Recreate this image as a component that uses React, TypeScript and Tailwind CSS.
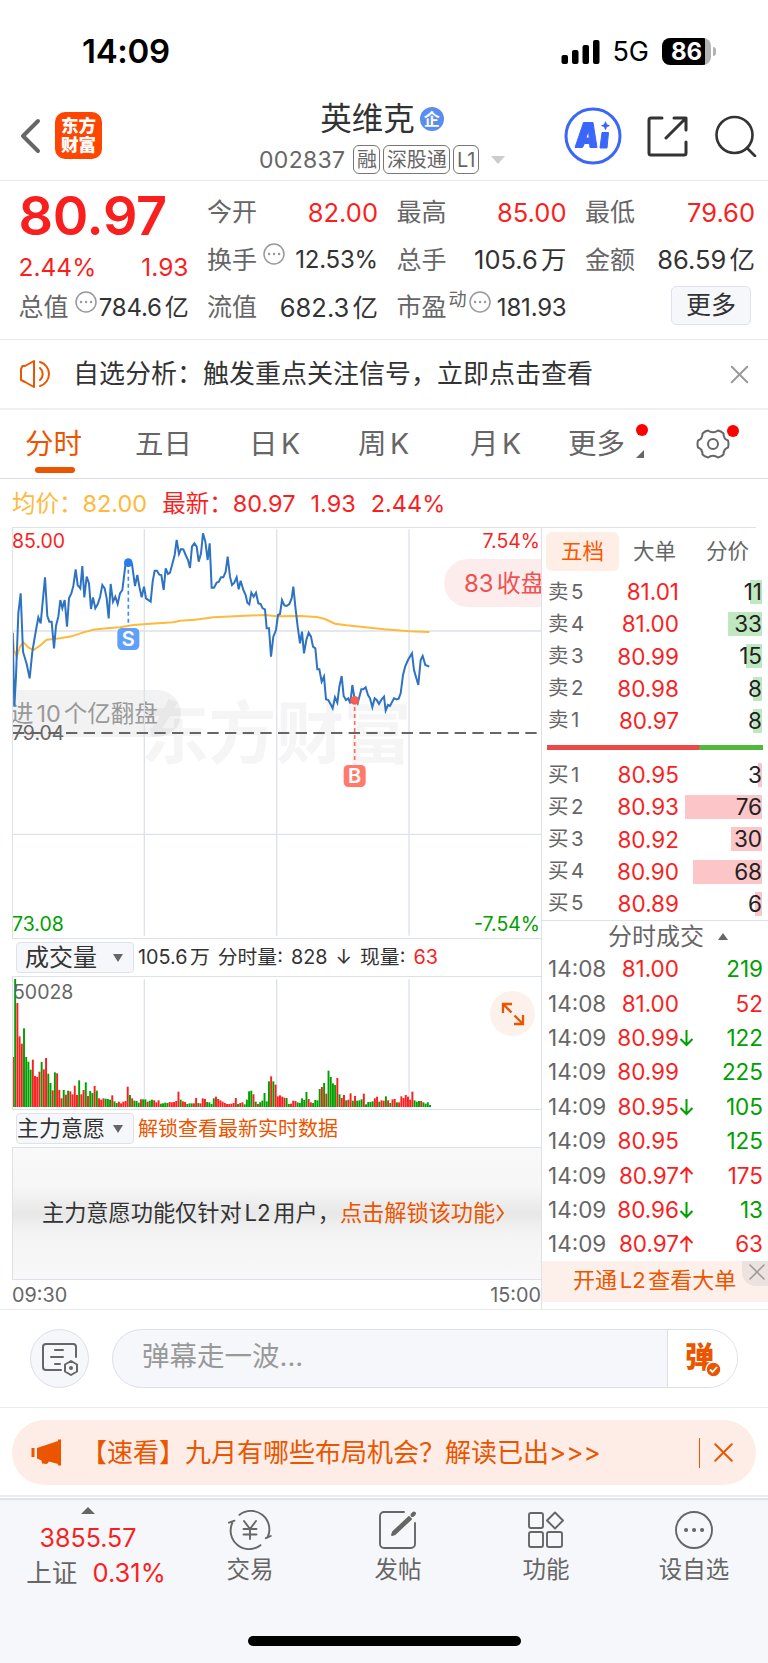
import type { ReactNode } from 'react';
import { X } from 'lucide-react';

const RED = '#fa1f1f';
const GREEN = '#00a000';
const GRID = '#dde2ea';

// Chart geometry is drawn at three units per pixel.
const pricePoints =
  '38,668 43,890 48,800 55,610 62,550 69,725 80,762 89,805 97,725 108,660 115,622 122,640 135,502 142,618 148,635 155,635 162,715 168,648 175,620 181,570 187,595 194,570 201,650 207,565 214,550 220,528 227,478 233,525 241,535 247,468 253,562 260,500 267,520 273,597 279,562 286,595 293,583 300,562 307,525 314,535 320,565 326,625 332,522 339,575 346,560 353,582 360,550 367,540 372,500 377,458 396,462 405,528 412,495 418,530 425,562 432,530 438,565 452,575 458,515 464,482 471,482 478,494 484,495 491,540 497,475 504,492 510,488 517,462 524,435 530,390 537,432 543,417 550,418 557,435 564,450 570,474 576,410 583,400 590,410 596,455 603,430 609,370 616,395 623,450 629,400 635,533 642,533 650,518 656,516 663,502 670,502 677,485 683,440 690,500 696,525 703,518 710,502 716,538 722,512 730,540 737,555 742,578 748,583 754,548 761,560 768,548 775,580 782,582 788,595 795,598 800,655 807,655 813,740 820,680 828,660 834,615 840,612 846,570 853,586 860,588 868,582 875,565 880,530 886,590 893,650 900,700 906,665 912,730 919,690 926,668 933,680 939,710 946,715 952,778 958,778 965,815 972,800 978,868 985,870 993,885 998,895 1005,862 1012,878 1018,830 1025,798 1031,858 1038,870 1045,865 1051,880 1057,825 1063,862 1073,880 1084,838 1090,838 1097,832 1104,855 1110,865 1117,892 1124,865 1130,870 1137,882 1145,868 1152,860 1157,902 1164,885 1170,888 1182,865 1190,868 1196,866 1202,850 1209,795 1216,768 1224,750 1236,730 1242,780 1255,825 1262,750 1268,738 1276,765 1288,770';

const averagePoints =
  '38,668 42,720 50,740 60,710 70,697 85,712 100,720 120,707 140,689 180,685 215,679 250,667 280,659 320,655 360,652 400,645 430,643 520,637 540,632 585,629 640,622 720,618 795,615 830,619 900,618 950,621 975,627 1005,641 1040,646 1152,658 1230,664 1288,666';

// Positive values are buying minutes, negative ones selling minutes.
const volumes = [
  150, -384, 312, 212, 190, -236, -150, -136, -112, 142, 93, 90, 106, -135, 113, 147, -100, -72, 50, -104,
  101, 51, 26, -51, 37, -49, 47, 38, 64, 36, -80, 38, 51, -74, 33, -48, -42, 63, -49, 26,
  22, 26, -25, -24, -22, 35, -17, -12, 16, 11, 16, 18, 61, -36, 26, -19, -18, -13, 23, -23,
  -23, 16, -19, -22, 20, 14, 20, -10, -11, -13, -12, 15, 14, 15, 18, 46, -22, 17, 15, -9,
  -11, -11, 11, 27, -12, 11, 26, 24, -15, -14, -9, -26, 31, 24, 20, 16, 12, 9, 9, 10,
  12, 27, -9, 12, 14, -8, -22, -47, -49, 38, -16, 9, -14, -19, -42, -17, -77, 92, -77, 67,
  32, 35, 31, 28, -27, -9, 10, 19, 18, -14, -12, -26, -21, -45, 24, 14, -12, -21, -20, -54,
  60, -72, 40, -109, -90, -71, -66, 87, -38, 27, 36, -20, 22, 41, -19, 33, -19, -20, -23, 40,
  -8, -15, -15, -17, 26, 31, -16, 20, 19, -32, 20, -12, 23, 24, -14, 14, 32, 27, 36, 31,
  22, 46, -20, -16, -18, 18, -14, -10, -14, -6,
];

const asks = [
  { label: '卖5', price: '81.01', amount: 11 },
  { label: '卖4', price: '81.00', amount: 33 },
  { label: '卖3', price: '80.99', amount: 15 },
  { label: '卖2', price: '80.98', amount: 8 },
  { label: '卖1', price: '80.97', amount: 8 },
];

const bids = [
  { label: '买1', price: '80.95', amount: 3 },
  { label: '买2', price: '80.93', amount: 76 },
  { label: '买3', price: '80.92', amount: 30 },
  { label: '买4', price: '80.90', amount: 68 },
  { label: '买5', price: '80.89', amount: 6 },
];

const trades = [
  { time: '14:08', price: '81.00', dir: '', amount: 219, up: false },
  { time: '14:08', price: '81.00', dir: '', amount: 52, up: true },
  { time: '14:09', price: '80.99', dir: 'down', amount: 122, up: false },
  { time: '14:09', price: '80.99', dir: '', amount: 225, up: false },
  { time: '14:09', price: '80.95', dir: 'down', amount: 105, up: false },
  { time: '14:09', price: '80.95', dir: '', amount: 125, up: false },
  { time: '14:09', price: '80.97', dir: 'up', amount: 175, up: true },
  { time: '14:09', price: '80.96', dir: 'down', amount: 13, up: false },
  { time: '14:09', price: '80.97', dir: 'up', amount: 63, up: true },
];

function StatusBar() {
  return (
    <div className="flex h-[90px] items-center justify-between pt-3 pl-[82px] pr-[52px]">
      <span className="text-[33px] font-semibold leading-none tracking-[-0.3px] text-black">14:09</span>
      <div className="flex items-center">
        <svg width="39" height="25" viewBox="0 0 39 25">
          <rect x="0.5" y="16" width="6.5" height="9" rx="2" />
          <rect x="11" y="11" width="6.5" height="14" rx="2" />
          <rect x="21.5" y="6" width="6.5" height="19" rx="2" />
          <rect x="32" y="1" width="6.5" height="24" rx="2" />
        </svg>
        <span className="ml-[12px] text-[27px] leading-none text-black">5G</span>
        <div className="ml-[13px] flex h-[27px] w-[49px] items-center justify-center rounded-[8px] bg-[linear-gradient(to_right,black_43px,#b3b3b3_43px)] text-[24px] font-bold leading-[27px] text-white">
          86
        </div>
        <div className="ml-[2px] h-[9px] w-[3px] rounded-r-full bg-[#b3b3b3]" />
      </div>
    </div>
  );
}

function Tag({ children }: { children: ReactNode }) {
  return (
    <span className="flex h-[29px] items-center justify-center rounded-[6px] border border-[#777] px-[2.500px] text-[20px] leading-none text-[#666]">
      {children}
    </span>
  );
}

function Header() {
  return (
    <header className="flex h-[91px] items-center border-b border-[#e8e8e8]">
      <div className="flex w-[256px] items-center pl-[20px] pt-[1px]">
        <svg width="21" height="36" viewBox="0 0 21 36" fill="none" stroke="#666" strokeWidth="4" strokeLinecap="round" strokeLinejoin="round">
          <path d="M18 3 3 18l15 15" />
        </svg>
        <div className="ml-[14px] flex h-[47px] w-[47px] flex-col items-center justify-center rounded-[10px] bg-[#ff4600] text-[17.5px] font-black leading-[18.5px] text-white">
          <span>东方</span>
          <span>财富</span>
        </div>
      </div>
      <div className="flex w-[252px] flex-col items-center pt-[6px]">
        <div className="flex items-center gap-[5px]">
          <span className="text-[31.5px] leading-[38px] text-[#333]">英维克</span>
          <span className="flex size-[24px] items-center justify-center rounded-full bg-[#5b8def] text-[16px] font-bold leading-none text-white">企</span>
        </div>
        <div className="mt-[5px] flex items-center">
          <span className="mr-[8px] text-[23px] leading-[34px] tracking-[0.3px] text-[#666]">002837</span>
          <div className="flex gap-[3px]">
            <Tag>融</Tag>
            <Tag>深股通</Tag>
            <Tag>L1</Tag>
          </div>
          <svg className="ml-[12px]" width="14" height="8" viewBox="0 0 14 8" fill="#ccc">
            <path d="M0 0h14L7 8z" />
          </svg>
        </div>
      </div>
      <div className="ml-auto flex items-center pr-[11px] pt-[2px]">
        <svg width="58" height="58" viewBox="0 0 58 58">
          <circle cx="29" cy="29" r="27" fill="none" stroke="#3a66fa" strokeWidth="3" />
          <path d="M19.500 15.500h9.500l4 25h-7l-.5-4h-5l-2 4h-7.500zM24.500 24l-2.700 7h3.500z" fill="#3a66fa" fillRule="evenodd" stroke="#3a66fa" strokeLinejoin="round" />
          <path d="M38 25.500h6.500l-1.500 15.500h-7z" fill="#3a66fa" stroke="#3a66fa" strokeLinejoin="round" />
          <path d="M41.500 14l1.500 3.300 3.300 1.400-3.300 1.400-1.500 3.400-1.500-3.400-3.300-1.400 3.300-1.400z" fill="#3a66fa" />
        </svg>
        <svg className="ml-[25px]" width="41" height="41" viewBox="0 0 41 41" fill="none" stroke="#333" strokeWidth="3" strokeLinecap="round" strokeLinejoin="round">
          <path d="M15 2H4a2 2 0 0 0-2 2v33a2 2 0 0 0 2 2h33a2 2 0 0 0 2-2V26M27 2h12v12M39 2 19 22" />
        </svg>
        <svg className="ml-[27px]" width="42" height="42" viewBox="0 0 42 42" fill="none" stroke="#333" strokeWidth="2.600" strokeLinecap="round">
          <circle cx="19.500" cy="20" r="18" />
          <path d="m32 33 8 8" />
        </svg>
      </div>
    </header>
  );
}

function Dots() {
  return (
    <svg width="22" height="22" viewBox="0 0 22 22" fill="none" stroke="#999" strokeWidth="1.500">
      <circle cx="11" cy="11" r="10" />
      <path d="M6 11h.1M11 11h.1M16 11h.1" strokeWidth="2.400" strokeLinecap="round" />
    </svg>
  );
}

function Stat({ label, value, red, mark, sup }: { label: string; value: string; red?: boolean; mark?: boolean; sup?: string }) {
  return (
    <div className="flex h-[47.500px] items-center justify-between whitespace-nowrap">
      <span className="flex items-center text-[25px] text-[#666]">
        {label}
        {sup && <span className="-mt-4 ml-[2px] text-[18px]">{sup}</span>}
        {mark && (
          <span className={sup ? '-mt-3 ml-[2px]' : '-mt-3 ml-[6px]'}>
            <Dots />
          </span>
        )}
      </span>
      <span className={`${red ? 'text-[#fa1f1f]' : 'text-[#333]'} ${mark ? 'text-[24px] tracking-[-0.2px]' : 'text-[25.500px]'}`}>{value}</span>
    </div>
  );
}

function Quote() {
  return (
    <section className="grid h-[159px] grid-cols-[170px_171px_170px_170px] gap-x-[18.500px] border-b border-[#e8e8e8] pl-[18.500px] pt-[8px]">
      <div className="text-[#fa1f1f]">
        <div className="h-[55px] text-[54px] font-semibold leading-[53px] tracking-[-0.3px]">80.97</div>
        <div className="flex h-[40px] items-center justify-between pt-[6px] text-[24.500px]">
          <span>2.44%</span>
          <span>1.93</span>
        </div>
        <Stat label="总值" value="784.6亿" mark />
      </div>
      <div>
        <Stat label="今开" value="82.00" red />
        <Stat label="换手" value="12.53%" mark />
        <Stat label="流值" value="682.3亿" />
      </div>
      <div>
        <Stat label="最高" value="85.00" red />
        <Stat label="总手" value="105.6万" />
        <Stat label="市盈" sup="动" value="181.93" mark />
      </div>
      <div>
        <Stat label="最低" value="79.60" red />
        <Stat label="金额" value="86.59亿" />
        <button className="ml-auto mr-[4px] mt-[2px] flex h-[39px] w-[80px] items-center justify-center rounded-[5px] border border-[#dfe2e8] bg-[#f6f7fa] text-[25px] text-[#333]">
          更多
        </button>
      </div>
    </section>
  );
}

function Notice() {
  return (
    <div className="flex h-[70px] items-center border-b-2 border-[#efefef] pl-[19px] pr-[13px]">
      <svg width="34" height="30" viewBox="0 0 34 30" fill="none" stroke="#eb5500" strokeWidth="2" strokeLinecap="round" strokeLinejoin="round">
        <path d="M2 10v11l4 2 9 5V2L6 7H3.500zM21 9a8 8 0 0 1 0 12M21 3a12.500 12.500 0 0 1 0 24" />
      </svg>
      <span className="ml-[20px] mt-[-2px] text-[26px] text-[#333]">自选分析：触发重点关注信号，立即点击查看</span>
      <X className="ml-auto text-[#999]" size={31} strokeWidth={2} absoluteStrokeWidth />
    </div>
  );
}

function Tabs() {
  return (
    <nav className="flex h-[69px] items-center border-b border-[#dcdde4] text-[28.500px] text-[#666]">
      <span className="relative ml-[25px] w-[110px] text-[#eb5500]">
        分时
        <i className="absolute -bottom-[8px] left-[10px] h-[6px] w-[40px] rounded-full bg-[#eb5500]" />
      </span>
      <span className="w-[114px]">五日</span>
      <span className="w-[109px]">日K</span>
      <span className="w-[112px]">周K</span>
      <span className="w-[98px]">月K</span>
      <span className="relative w-[128px]">
        更多
        <i className="absolute left-[68px] top-[1px] size-[12px] rounded-full bg-[#ff0000]" />
        <svg className="absolute left-[68px] top-[27px]" width="8" height="8" viewBox="0 0 8 8" fill="#666">
          <path d="M8 0v8H0z" />
        </svg>
      </span>
      <span className="relative">
        <svg width="34" height="32" viewBox="0 0 34 32" fill="none" stroke="#666" strokeWidth="2" strokeLinejoin="round">
          <path d="M12 2.500C14 4 15 4.300 17 4.300S20 4 22 2.500Q25 3 27.500 5.500C27.500 9.500 29 11.500 32 12.500Q33 16 32 19.500C29 20.500 27.500 22.500 27.500 26.500Q25 29 22 29.500C20 28 19 27.700 17 27.700S14 28 12 29.500Q9 29 6.500 26.500C6.500 22.500 5 20.500 2 19.500Q1 16 2 12.500C5 11.500 6.500 9.500 6.500 5.500Q9 3 12 2.500z" />
          <circle cx="17" cy="16" r="5" />
        </svg>
        <i className="absolute -top-[3px] left-[31px] size-[12px] rounded-full bg-[#ff0000]" />
      </span>
    </nav>
  );
}

function PriceChart() {
  return (
    <div className="relative h-[410px] overflow-hidden border-l border-[#dde2ea]">
      <div className="absolute left-[128px] top-[160px] text-[68px] font-bold leading-[90px] tracking-[-0.5px] text-[#f5f5f5]">东方财富</div>
      <div className="absolute -left-[4px] top-[162px] flex h-[47px] w-[172px] items-center rounded-r-full bg-black/5 pl-[1px] text-[23.500px] text-[#999]">
        进10个亿翻盘
      </div>
      <svg className="absolute left-0 top-0" width="529" height="411" viewBox="39 354 1587 1233" fill="none">
        <path d="M39 663h1587M39 1273h1587" stroke={GRID} strokeWidth="4" />
        <path d="M433 358v1219M830 358v1219M1227 358v1219" stroke={GRID} strokeWidth="4" />
        <path d="M39 969H1626" stroke="#666" strokeWidth="6" strokeDasharray="34 19" />
        <polyline points={averagePoints} stroke="#ffb93c" strokeWidth="6" />
        <polyline points={pricePoints} stroke="#2e72c2" strokeWidth="6" />
        <path d="M385 458v190" stroke="#3b8cff" strokeWidth="5" strokeDasharray="12 9" />
        <circle cx="385" cy="458" r="13" fill="#2a7cf0" />
        <rect x="352" y="654" width="66" height="66" rx="14" fill="#5fa0fa" />
        <text x="385" y="708" fill="#fff" fontSize="60" fontWeight="600" textAnchor="middle">S</text>
        <path d="M1064 870v190" stroke="#ff6a5a" strokeWidth="5" strokeDasharray="12 9" />
        <circle cx="1064" cy="871" r="13" fill="#f95d50" />
        <rect x="1031" y="1065" width="66" height="66" rx="14" fill="#ff7a6b" />
        <text x="1064" y="1119" fill="#fff" fontSize="60" fontWeight="600" textAnchor="middle">B</text>
      </svg>
      <div className="absolute left-[431px] top-[31px] flex h-[48px] w-[120px] items-center rounded-l-full bg-[#fdecec] pl-[20px] pt-[1px] text-[24px] text-[#f05050]">
        83收盘
      </div>
      <span className="absolute -left-px top-0 text-[19.500px] leading-[26px] text-[#fa1f1f]">85.00</span>
      <span className="absolute right-[1px] top-0 text-[19.500px] leading-[26px] text-[#fa1f1f]">7.54%</span>
      <span className="absolute -left-px top-[192px] text-[19.500px] leading-[26px] text-[#666]">79.04</span>
      <span className="absolute bottom-[1px] -left-px text-[19.500px] leading-[26px] text-[#00a000]">73.08</span>
      <span className="absolute bottom-[1px] right-[1px] text-[19.500px] leading-[26px] text-[#00a000]">-7.54%</span>
    </div>
  );
}

function VolumeChart() {
  return (
    <div className="relative h-[132px] border-l border-[#dde2ea]">
      <svg className="absolute left-0 top-0" width="529" height="132" viewBox="39 21 1587 396">
        <path d="M433 28v383M830 28v383M1227 28v383" stroke={GRID} strokeWidth="4" />
        {volumes.map((v, i) => (
          <rect key={i} x={36 + i * 6.62} y={411 - Math.abs(v)} width="5.8" height={Math.abs(v)} fill={v > 0 ? RED : GREEN} />
        ))}
      </svg>
      <span className="absolute left-0 top-[2px] text-[19.500px] leading-[26px] text-[#666]">50028</span>
      <div className="absolute right-[6px] top-[14px] flex size-[45px] items-center justify-center rounded-full bg-[#fdf1ec]">
        <svg width="24" height="24" viewBox="0 0 24 24" fill="none" stroke="#eb5500" strokeWidth="2.300">
          <path d="M2 11V2h9M2 2l8.500 8.500M22 13v9h-9M22 22l-8.500-8.500" />
        </svg>
      </div>
    </div>
  );
}

function Select({ children, className }: { children: ReactNode; className: string }) {
  return (
    <div className={`ml-[4px] flex h-[31px] w-[118px] items-center whitespace-nowrap rounded-[4px] border border-[#dfe2e8] bg-[#f6f7fa] text-[#333] ${className}`}>
      {children}
      <svg className="ml-auto mr-[10px]" width="10" height="8" viewBox="0 0 10 8" fill="#666">
        <path d="M0 0h10L5 8z" />
      </svg>
    </div>
  );
}

function Charts() {
  return (
    <div className="ml-[12px] w-[529px]">
      <PriceChart />
      <div className="flex h-[39px] items-center border-y border-[#dde2ea]">
        <Select className="pl-[8px] text-[24px]">成交量</Select>
        <span className="ml-[4px] whitespace-pre text-[19.800px] text-[#333] [word-spacing:2.500px]">
          105.6万 分时量: 828 ↓ 现量: <b className="font-normal text-[#fa1f1f]">63</b>
        </span>
      </div>
      <VolumeChart />
      <div className="flex h-[39px] items-center border-y border-[#dde2ea]">
        <Select className="text-[22px]">主力意愿</Select>
        <span className="ml-[4px] text-[20px] text-[#eb5500]">解锁查看最新实时数据</span>
      </div>
      <div className="flex h-[132px] items-center border-b border-l border-[#dde2ea] bg-[linear-gradient(to_bottom,#f9f9f9,#f6f6f6_30%,#e8e8e8_50%,#f4f4f4_66%,#f8f8f8)] pb-[2px] pl-[29px] text-[22.200px] text-[#333]">
        主力意愿功能仅针对L2用户，
        <span className="text-[#eb5500]">点击解锁该功能</span>
        <svg width="10" height="18" viewBox="0 0 10 18" fill="none" stroke="#eb5500" strokeWidth="1.800">
          <path d="m2 1 6 8-6 8" />
        </svg>
      </div>
      <div className="flex h-[29px] items-center justify-between pt-[2px] text-[19.800px] text-[#666]">
        <span>09:30</span>
        <span>15:00</span>
      </div>
    </div>
  );
}

function Depth({ rows, bar }: { rows: typeof asks; bar: string }) {
  return (
    <>
      {rows.map((row) => (
        <div key={row.label} className="flex h-[32.200px] items-center pl-[6px] pr-[6px] text-[22.500px]">
          <span className="w-[42px] text-[20.500px] text-[#666]">{row.label}</span>
          <span className="w-[89px] text-right text-[#fa1f1f]">{row.price}</span>
          <span className="relative ml-auto h-[24px] text-right leading-[24px] text-[#222]">
            <i className={`absolute right-0 top-0 h-full ${bar}`} style={{ width: row.amount + 1 }} />
            <span className="relative">{row.amount}</span>
          </span>
        </div>
      ))}
    </>
  );
}

function OrderBook() {
  return (
    <div className="w-[227px] border-l border-[#dde2ea]">
      <div className="flex h-[48px] items-center pb-[1px] pl-[4px] text-[21.500px] text-[#666]">
        <span className="flex h-[39px] w-[73px] items-center justify-center rounded-[6px] bg-[#ffeee6] text-[#ff5500]">五档</span>
        <span className="ml-[14px]">大单</span>
        <span className="ml-[30px]">分价</span>
      </div>
      <Depth rows={asks} bar="bg-[#c0e8c0]" />
      <div className="flex h-[22px] items-center pl-[5px]">
        <i className="h-[5px] w-[216px] bg-[linear-gradient(100deg,#ec4848_70.500%,#52b83c_70.500%)]" />
      </div>
      <Depth rows={bids} bar="bg-[#fcc6c8]" />
      <div className="flex h-[32px] items-center border-t border-[#dde2ea] pl-[66px] pt-[1px] text-[24px] text-[#666]">
        分时成交
        <svg className="ml-[14px]" width="10" height="7" viewBox="0 0 10 7" fill="#666">
          <path d="M0 7h10L5 0z" />
        </svg>
      </div>
      {trades.map((t, i) => (
        <div key={i} className="flex h-[34.400px] items-center pl-[6px] pr-[5px] text-[22.500px]">
          <span className="w-[58px] text-[22.500px] text-[#666]">{t.time}</span>
          <span className="w-[73px] text-right text-[#fa1f1f]">{t.price}</span>
          {t.dir && (
            <svg width="15" height="18" viewBox="0 0 15 18" fill="none" stroke={t.dir === 'up' ? RED : GREEN} strokeWidth="2">
              <path d={t.dir === 'up' ? 'M7.500 17V2M1.500 8l6-6 6 6' : 'M7.500 1v15M1.500 10l6 6 6-6'} />
            </svg>
          )}
          <span className={`ml-auto ${t.up ? 'text-[#fa1f1f]' : 'text-[#00a000]'}`}>{t.amount}</span>
        </div>
      ))}
      <div className="relative flex h-[41px] items-center bg-[#fdf0ea] pb-[2px] pl-[31px] text-[22px] text-[#eb5500]">
        开通L2查看大单
        <span className="absolute right-0 top-0 flex h-[25px] w-[26px] items-center justify-center rounded-bl-[14px] bg-[#ece2de]">
          <X className="ml-[3px] mt-[-3px] shrink-0 text-[#999]" size={28} strokeWidth={1.500} absoluteStrokeWidth />
        </span>
      </div>
    </div>
  );
}

function CommentBar() {
  return (
    <div className="flex h-[99px] items-center border-b border-t border-[#ececf0] pl-[30px] pr-[30px]">
      <div className="flex size-[59px] items-center justify-center rounded-full border border-[#dcdfe6] bg-[#f6f7fa]">
        <svg className="ml-[1px] mt-[1px]" width="38" height="34" viewBox="0 0 38 34" fill="none" stroke="#666" strokeWidth="2" strokeLinecap="round">
          <path d="M20 28H5a3 3 0 0 1-3-3V5a3 3 0 0 1 3-3h27a3 3 0 0 1 3 3v10M14 8h8M10 15h12M14 22h5" />
          <path d="m30 20 6 3.500v7L30 34l-6-3.500v-7z" strokeLinejoin="round" transform="translate(0 -1)" />
          <circle cx="30" cy="26" r="1" fill="#666" />
        </svg>
      </div>
      <div className="ml-[23px] flex h-[59px] flex-1 overflow-hidden rounded-full border border-[#dcdfe6] bg-[#f6f7fa]">
        <span className="flex-1 pl-[29px] text-[27.500px] leading-[52px] text-[#999]">弹幕走一波...</span>
        <div className="flex w-[70px] border-l border-[#dcdfe6] bg-white pl-[17px] pt-[12px]">
          <div className="relative text-[29px] font-black leading-[32px] text-[#eb5500]">
            弹
            <svg className="absolute -right-[8px] top-[19px]" width="17" height="17" viewBox="0 0 17 17">
              <circle cx="8.500" cy="8.500" r="7.500" fill="#eb5500" stroke="#fff" strokeWidth="1.500" />
              <path d="m5 8.500 2.500 2.500 4.500-5" fill="none" stroke="#fff" strokeWidth="1.800" />
            </svg>
          </div>
        </div>
      </div>
    </div>
  );
}

function Promo() {
  return (
    <div className="h-[89px] border-b-2 border-[#ebebee] px-[12px] pt-[12px]">
      <div className="flex h-[65px] items-center rounded-full bg-[#fdede6] pl-[19px] pr-[16px] text-[#eb5500]">
        <svg width="31" height="27" viewBox="0 0 31 27" fill="#eb5500">
          <path d="M0.500 9h3v9h-3zM6 9l21-7V0.500h3V26.500h-3V25l-9-2.500-2 2.500-5-.5-.5-3L6 19.500z" />
        </svg>
        <span className="ml-[19px] text-[26px]">【速看】九月有哪些布局机会？解读已出&gt;&gt;&gt;</span>
        <i className="ml-auto h-[30px] w-[1.500px] bg-[#eb5500]" />
        <X className="ml-[7px]" size={33} strokeWidth={2} absoluteStrokeWidth />
      </div>
    </div>
  );
}

function NavItem({ label, children }: { label: string; children: ReactNode }) {
  return (
    <div className="flex w-[148px] flex-col items-center pt-[10px]">
      <svg width="44" height="40" viewBox="0 0 44 40" fill="none" stroke="#666" strokeWidth="1.900" strokeLinecap="round" strokeLinejoin="round">
        {children}
      </svg>
      <span className="mt-[3px] text-[23.500px] leading-[34px] text-[#666]">{label}</span>
    </div>
  );
}

function BottomNav() {
  return (
    <footer className="mt-[1px] flex h-[165px] flex-col border-t-2 border-[#dfe2e6] bg-[#f6f7fa]">
      <div className="flex">
        <div className="flex w-[176px] flex-col items-center pt-[7px]">
          <svg width="14" height="7" viewBox="0 0 14 7" fill="#666">
            <path d="M0 7h14L7 0z" />
          </svg>
          <span className="mt-[7px] text-[25px] leading-[34px] text-[#fa1f1f]">3855.57</span>
          <span className="ml-[16px] text-[25.500px] leading-[36px] text-[#666]">
            上证<span className="ml-[12px] text-[#fa1f1f]">0.31%</span>
          </span>
        </div>
        <NavItem label="交易">
          <path d="M11.500 4.800A18.500 18.500 0 0 1 39.500 27.500M37.800 28.200l5-2.200M32.500 35.200A18.500 18.500 0 0 1 4.500 12.500M1 12.700l5.500-2" />
          <path d="m16 11 6 8 6-8M22 19v10M15.500 19h13M15.500 24.500h13" />
        </NavItem>
        <NavItem label="发帖">
          <path d="M28 2H8a4 4 0 0 0-4 4v28a4 4 0 0 0 4 4h27a4 4 0 0 0 4-4V13" />
          <path d="M36.500 5 38 3.500" strokeWidth="4" />
          <path d="m33 7 2 2-16 15-3 1 1-3z" fill="#666" />
        </NavItem>
        <NavItem label="功能">
          <rect x="5" y="3" width="14" height="15" rx="2" />
          <rect x="5" y="22" width="14" height="15" rx="2" />
          <rect x="23" y="22" width="15" height="15" rx="2" />
          <path d="m31 2.500 8 8-8 8-8-8z" />
        </NavItem>
        <NavItem label="设自选">
          <circle cx="22" cy="20" r="18" />
          <path d="M14 20h.1M22 20h.1M30 20h.1" strokeWidth="4" />
        </NavItem>
      </div>
      <div className="mx-auto mb-[17px] mt-auto h-[10px] w-[273px] rounded-full bg-black" />
    </footer>
  );
}

export default function App() {
  return (
    <div className="min-h-[1663px] w-[768px] overflow-hidden bg-white font-['Inter','Noto_Sans_CJK_SC',sans-serif] [text-autospace:normal]">
      <StatusBar />
      <Header />
      <Quote />
      <Notice />
      <Tabs />
      <div className="flex h-[48px] items-center gap-[15px] pl-[12px] pt-[1px] text-[23.500px] text-[#fa1f1f]">
        <span className="text-[#ffb93c]">均价：82.00</span>
        <span>最新：80.97</span>
        <span>1.93</span>
        <span>2.44%</span>
      </div>
      <div className="mx-[12px] h-px bg-[#dde2ea]" />
      <div className="flex h-[781px]">
        <Charts />
        <OrderBook />
      </div>
      <CommentBar />
      <Promo />
      <BottomNav />
    </div>
  );
}
